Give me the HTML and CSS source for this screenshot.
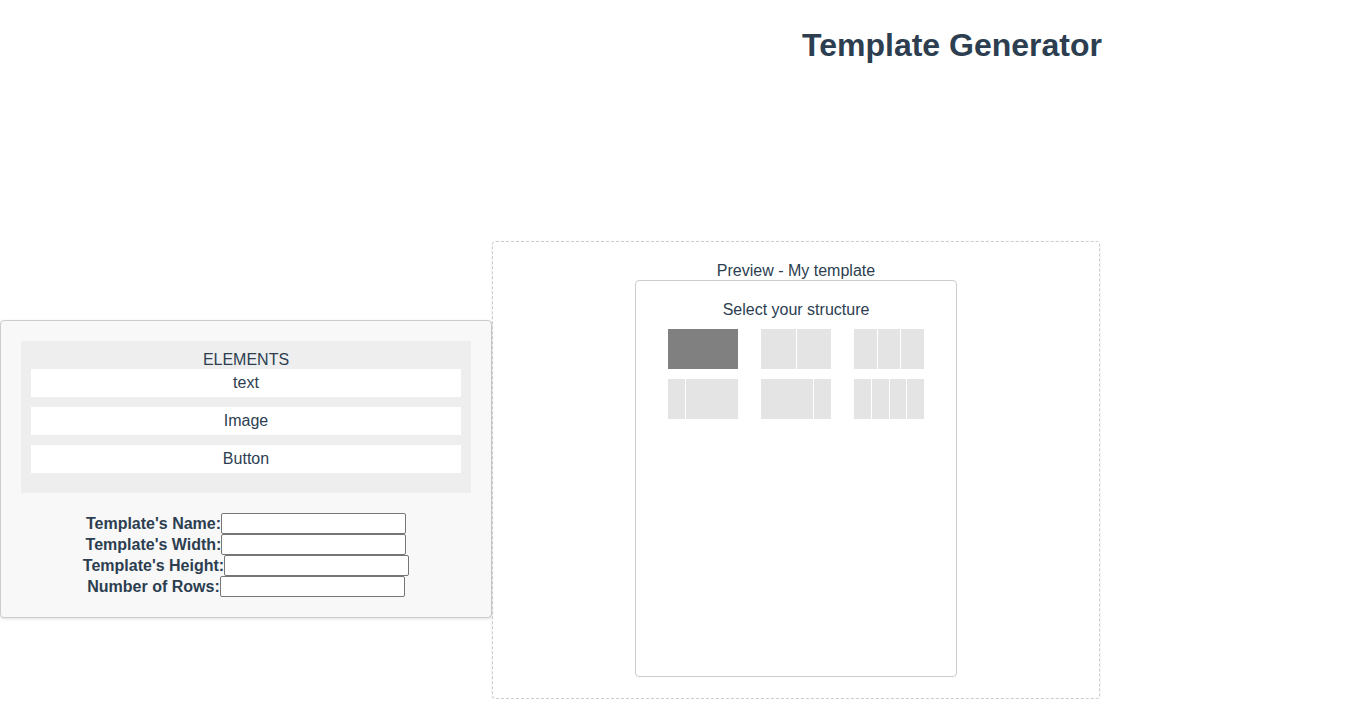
FILE: index.html
```html
<!DOCTYPE html>
<html lang="en">
<head>
    <meta charset="UTF-8">
    <meta name="viewport" content="width=device-width, initial-scale=1.0">
    <title>Template Generator</title>
    <link rel="stylesheet" href="styles.css">
</head>
<body>

    <header>
        <h1>Template Generator</h1>
    </header>

    <main class="workspace">
        <div class="side-panel">
            <div class="elements">
                <div class="elements-title">ELEMENTS</div>
                <div class="element-item">text</div>
                <div class="element-item">Image</div>
                <div class="element-item">Button</div>
            </div>

            <form class="settings">
                <div class="field"><label>Template's Name:</label><input type="text"></div>
                <div class="field"><label>Template's Width:</label><input type="text"></div>
                <div class="field"><label>Template's Height:</label><input type="text"></div>
                <div class="field"><label>Number of Rows:</label><input type="text"></div>
            </form>
        </div>

        <div class="preview">
            <div class="preview-title">Preview - My template</div>
            <div class="preview-card">
                <div class="structure-title">Select your structure</div>
                <div class="structures">
                    <div class="structure selected"><span class="col"></span></div>
                    <div class="structure"><span class="col"></span><span class="col"></span></div>
                    <div class="structure"><span class="col"></span><span class="col"></span><span class="col"></span></div>
                    <div class="structure"><span class="col quarter"></span><span class="col three-quarter"></span></div>
                    <div class="structure"><span class="col three-quarter"></span><span class="col quarter"></span></div>
                    <div class="structure"><span class="col"></span><span class="col"></span><span class="col"></span><span class="col"></span></div>
                </div>
            </div>
        </div>
    </main>

</body>
</html>
```

FILE: styles.css
```css
body {
    font-family: "Liberation Sans", Arial, sans-serif;
    color: #2c3e50;
    margin: 0;
    padding: 0;
    background-color: #fff;
}

header {
    padding: 27px 0 0 549px;
    text-align: center;
}

h1 {
    margin: 0;
    font-size: 32px;
    line-height: 37px;
}

.workspace {
    display: flex;
    align-items: center;
    margin-top: 177px;
}

.side-panel {
    width: 492px;
    box-sizing: border-box;
    padding: 20px;
    margin-bottom: 2px;
    background-color: #f8f8f8;
    border: 1px solid #ccc;
    border-radius: 4px;
    box-shadow: 0 1px 3px rgba(0, 0, 0, 0.12);
}

.elements {
    background-color: #eee;
    padding: 10px 10px 20px;
    text-align: center;
}

.elements-title {
    line-height: 18px;
}

.element-item {
    background-color: #fff;
    line-height: 18px;
    padding: 5px 0;
    margin-bottom: 10px;
}

.element-item:last-child {
    margin-bottom: 0;
}

.settings {
    margin-top: 20px;
}

.field {
    display: flex;
    justify-content: center;
    align-items: center;
    height: 21px;
}

.field label {
    font-weight: bold;
    font-size: 16px;
}

.field input {
    width: 185px;
    height: 21px;
    box-sizing: border-box;
    margin: 0;
    padding: 1px 2px;
    border: 1px solid #767676;
    border-radius: 2px;
    font-size: 13px;
    background-color: #fff;
}

.preview {
    width: 608px;
    box-sizing: border-box;
    padding: 20px 20px 21px;
    border: 1px dashed #ccc;
    border-radius: 4px;
    box-shadow: 0 1px 3px rgba(0, 0, 0, 0.08);
    text-align: center;
}

.preview-title {
    line-height: 18px;
}

.preview-card {
    width: 322px;
    height: 397px;
    box-sizing: border-box;
    margin: 0 auto;
    padding-top: 20px;
    border: 1px solid #ccc;
    border-radius: 4px;
}

.structure-title {
    line-height: 18px;
}

.structures {
    display: grid;
    grid-template-columns: repeat(3, 70px);
    column-gap: 23px;
    row-gap: 10px;
    justify-content: center;
    margin-top: 10px;
}

.structure {
    display: flex;
    gap: 1px;
    height: 40px;
    background-color: #fff;
}

.col {
    flex: 1;
    background-color: #e4e4e4;
}

.col.quarter {
    flex: 1;
}

.col.three-quarter {
    flex: 3;
}

.structure.selected .col {
    background-color: #808080;
}
```
